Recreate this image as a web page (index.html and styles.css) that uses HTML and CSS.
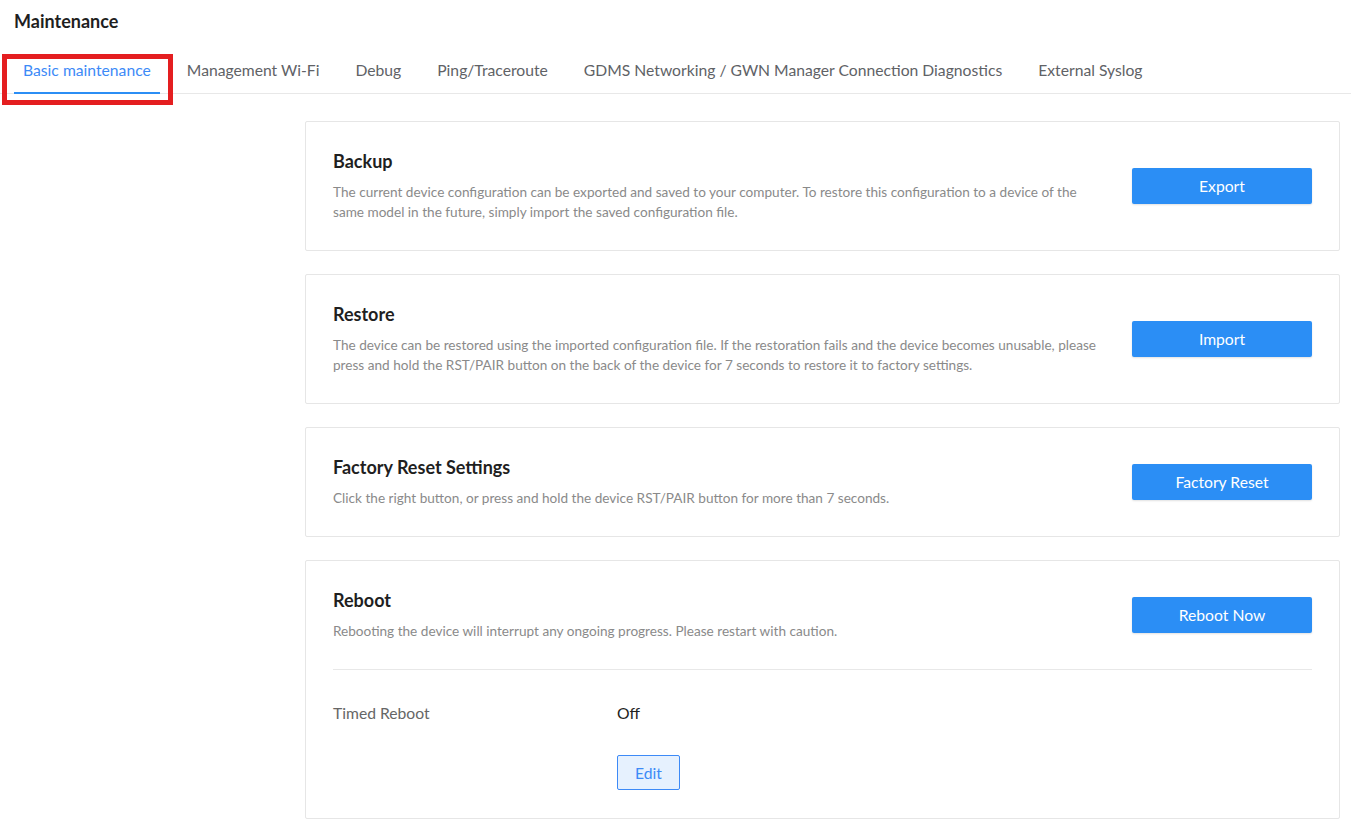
FILE: index.html
```html
<!DOCTYPE html>
<html lang="en">
<head>
<meta charset="utf-8">
<title>Maintenance</title>
<link rel="stylesheet" href="styles.css">
</head>
<body>
<div class="page">
  <h1 class="page-title">Maintenance</h1>
  <nav class="tabs">
    <a class="tab active">Basic maintenance<span class="mark"></span></a>
    <a class="tab">Management Wi-Fi</a>
    <a class="tab">Debug</a>
    <a class="tab">Ping/Traceroute</a>
    <a class="tab">GDMS Networking / GWN Manager Connection Diagnostics</a>
    <a class="tab">External Syslog</a>
  </nav>
  <main class="cards">
    <section class="card">
      <div class="card-row">
        <div class="card-text">
          <h2 class="card-title">Backup</h2>
          <p class="card-desc">The current device configuration can be exported and saved to your computer. To restore this configuration to a device of the same model in the future, simply import the saved configuration file.</p>
        </div>
        <button class="btn-primary">Export</button>
      </div>
    </section>
    <section class="card">
      <div class="card-row">
        <div class="card-text">
          <h2 class="card-title">Restore</h2>
          <p class="card-desc">The device can be restored using the imported configuration file. If the restoration fails and the device becomes unusable, please press and hold the RST/PAIR button on the back of the device for 7 seconds to restore it to factory settings.</p>
        </div>
        <button class="btn-primary">Import</button>
      </div>
    </section>
    <section class="card">
      <div class="card-row">
        <div class="card-text">
          <h2 class="card-title">Factory Reset Settings</h2>
          <p class="card-desc">Click the right button, or press and hold the device RST/PAIR button for more than 7 seconds.</p>
        </div>
        <button class="btn-primary">Factory Reset</button>
      </div>
    </section>
    <section class="card">
      <div class="card-row">
        <div class="card-text">
          <h2 class="card-title">Reboot</h2>
          <p class="card-desc">Rebooting the device will interrupt any ongoing progress. Please restart with caution.</p>
        </div>
        <button class="btn-primary">Reboot Now</button>
      </div>
      <div class="divider"></div>
      <div class="timed">
        <div class="field">
          <span class="field-label">Timed Reboot</span>
          <span class="field-value">Off</span>
        </div>
        <div class="field-actions">
          <button class="btn-edit">Edit</button>
        </div>
      </div>
    </section>
  </main>
</div>
</body>
</html>
```

FILE: styles.css
```css
* { box-sizing: border-box; }
html, body {
  margin: 0;
  padding: 0;
  background: #ffffff;
}
body {
  font-family: Lato, "Open Sans", "Liberation Sans", sans-serif;
  color: #222222;
}
.page {
  width: 1351px;
}
.page-title {
  margin: 0;
  padding: 10px 14px 0;
  font-size: 18px;
  line-height: 22px;
  font-weight: 700;
  color: #1f1f1f;
}
.tabs {
  display: flex;
  gap: 18px;
  margin-top: 16px;
  padding-left: 14px;
  border-bottom: 1px solid #e8e8e8;
}
.tab {
  position: relative;
  display: block;
  padding: 11px 9px 11px;
  margin-bottom: -1px;
  font-size: 15.7px;
  line-height: 22px;
  color: #606266;
  border-bottom: 2px solid transparent;
  white-space: nowrap;
  cursor: pointer;
}
.tab.active {
  color: #3d8af7;
  border-bottom-color: #2b8ef5;
}
.tab .mark {
  position: absolute;
  left: -12px;
  top: 6px;
  width: 171px;
  height: 51px;
  border: 5px solid #e41e20;
  pointer-events: none;
}
.cards {
  display: flex;
  flex-direction: column;
  gap: 23px;
  margin: 27px 11px 0 305px;
  padding-bottom: 10px;
}
.card {
  border: 1px solid #e6e6e6;
  border-radius: 2px;
  padding: 27px 27px 28px;
  background: #fff;
}
.card-row {
  display: flex;
  align-items: center;
  justify-content: space-between;
  gap: 30px;
}
.card-text {
  flex: 1;
  max-width: 768px;
}
.card-title {
  margin: 0;
  font-size: 18px;
  line-height: 24px;
  font-weight: 700;
  color: #1f1f1f;
}
.card-desc {
  margin: 9px 0 0;
  font-size: 13.6px;
  line-height: 20px;
  color: #8a8a8a;
}
.btn-primary {
  flex: 0 0 auto;
  width: 180px;
  height: 36px;
  border: none;
  border-radius: 2px;
  background: #2b8ef5;
  color: #ffffff;
  font-family: inherit;
  font-size: 15.7px;
  box-shadow: 0 1px 2px rgba(0, 0, 0, 0.12);
  cursor: pointer;
}
.divider {
  height: 1px;
  background: #e8e8e8;
  margin-top: 28px;
}
.timed {
  padding-top: 30px;
}
.field {
  display: flex;
  align-items: center;
  height: 26px;
  font-size: 15.7px;
}
.field-label {
  width: 284px;
  color: #666666;
}
.field-value {
  color: #222222;
}
.field-actions {
  margin-top: 29px;
  padding-left: 284px;
}
.btn-edit {
  width: 63px;
  height: 35px;
  border: 1px solid #3d8af7;
  border-radius: 2px;
  background: #e6f1fe;
  color: #3d8af7;
  font-family: inherit;
  font-size: 15.7px;
  cursor: pointer;
}
```
